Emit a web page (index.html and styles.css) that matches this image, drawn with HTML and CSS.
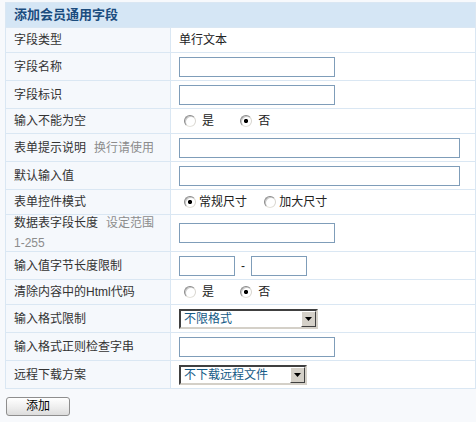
FILE: index.html
```html
<!DOCTYPE html>
<html lang="zh-CN">
<head>
<meta charset="utf-8">
<title>添加会员通用字段</title>
<link rel="stylesheet" href="styles.css">
</head>
<body>
<form class="field-form">
  <table class="form-table">
    <colgroup>
      <col class="col-label">
      <col class="col-value">
    </colgroup>
    <thead>
      <tr><th colspan="2" class="title-cell">添加会员通用字段</th></tr>
    </thead>
    <tbody>
      <tr class="row-text">
        <td class="label">字段类型</td>
        <td class="value">单行文本</td>
      </tr>
      <tr class="row-input">
        <td class="label">字段名称</td>
        <td class="value"><input type="text" class="txt"></td>
      </tr>
      <tr class="row-input">
        <td class="label">字段标识</td>
        <td class="value"><input type="text" class="txt"></td>
      </tr>
      <tr class="row-text">
        <td class="label">输入不能为空</td>
        <td class="value">
          <label class="opt opt-yes"><input type="radio" name="notnull" class="radio"><span>是</span></label>
          <label class="opt opt-no"><input type="radio" name="notnull" class="radio" checked><span>否</span></label>
        </td>
      </tr>
      <tr class="row-input">
        <td class="label">表单提示说明<span class="hint">换行请使用</span></td>
        <td class="value"><input type="text" class="txt txt-wide"></td>
      </tr>
      <tr class="row-input">
        <td class="label">默认输入值</td>
        <td class="value"><input type="text" class="txt txt-wide"></td>
      </tr>
      <tr class="row-text">
        <td class="label">表单控件模式</td>
        <td class="value">
          <label class="opt opt-tight"><input type="radio" name="size" class="radio" checked><span>常规尺寸</span></label>
          <label class="opt opt-tight opt-next"><input type="radio" name="size" class="radio"><span>加大尺寸</span></label>
        </td>
      </tr>
      <tr class="row-tall">
        <td class="label"><div class="label-wrap">数据表字段长度<span class="hint">设定范围</span><span class="hint hint-line">1-255</span></div></td>
        <td class="value"><input type="text" class="txt"></td>
      </tr>
      <tr class="row-input">
        <td class="label">输入值字节长度限制</td>
        <td class="value"><input type="text" class="txt txt-small"><span class="dash">-</span><input type="text" class="txt txt-small"></td>
      </tr>
      <tr class="row-text">
        <td class="label">清除内容中的Html代码</td>
        <td class="value">
          <label class="opt opt-yes"><input type="radio" name="nohtml" class="radio"><span>是</span></label>
          <label class="opt opt-no"><input type="radio" name="nohtml" class="radio" checked><span>否</span></label>
        </td>
      </tr>
      <tr class="row-input">
        <td class="label">输入格式限制</td>
        <td class="value">
          <span class="combo combo-format">
            <select class="combo-select"><option>不限格式</option></select>
            <span class="combo-btn"><svg width="7" height="4" viewBox="0 0 7 4"><path d="M0 0h7L3.5 4z" fill="#000"/></svg></span>
          </span>
        </td>
      </tr>
      <tr class="row-input">
        <td class="label">输入格式正则检查字串</td>
        <td class="value"><input type="text" class="txt"></td>
      </tr>
      <tr class="row-input">
        <td class="label">远程下载方案</td>
        <td class="value">
          <span class="combo combo-remote">
            <select class="combo-select"><option>不下载远程文件</option></select>
            <span class="combo-btn"><svg width="7" height="4" viewBox="0 0 7 4"><path d="M0 0h7L3.5 4z" fill="#000"/></svg></span>
          </span>
        </td>
      </tr>
    </tbody>
  </table>
  <div class="actions"><button type="submit" class="btn">添加</button></div>
</form>
</body>
</html>
```

FILE: styles.css
```css
html, body {
  margin: 0;
  padding: 0;
  background: #f7f9fc;
  overflow: hidden;
}

body {
  padding: 2px 0 0 5px;
  font-family: "Liberation Sans", "Noto Sans CJK SC", sans-serif;
  font-size: 12px;
  color: #333;
}

.form-table {
  width: 471px;
  border-collapse: collapse;
  table-layout: fixed;
  background: #fff;
}

.col-label { width: 165px; }

.form-table th,
.form-table td {
  border: 1px solid #dae7f3;
  padding: 0 8px;
  vertical-align: middle;
  line-height: 18px;
}

.title-cell {
  height: 24px;
  background: #d5e6f5;
  color: #1b4c7e;
  font-size: 13px;
  font-weight: bold;
  text-align: left;
}

.label {
  background: #f5f8fc;
  color: #333;
}

/* two-line label: 20px lines, allowed to bleed into the cell's edge */
.label-wrap {
  line-height: 20px;
  margin: -2px 0;
}

.value {
  background: #fff;
  color: #222;
  white-space: nowrap;
}

.row-text td { height: 24px; }
.row-input td { height: 27px; }
.row-tall td { height: 36px; }

.hint {
  color: #8c8c8c;
  margin-left: 8px;
}

.hint-line {
  display: block;
  margin-left: 0;
}

.txt {
  box-sizing: border-box;
  width: 156px;
  height: 20px;
  margin: 0;
  padding: 1px 3px;
  border: 1px solid #7f9db9;
  background: #fff;
  vertical-align: middle;
  font: inherit;
}

.txt-wide { width: 281px; }
.txt-small { width: 56px; }

.dash {
  display: inline-block;
  margin: 0 6px;
  vertical-align: middle;
}

/* radio options */
.opt {
  display: inline-flex;
  align-items: center;
  vertical-align: middle;
  margin-left: 5px;
}

.opt span { margin-left: 6px; }
.opt-no { margin-left: 23px; }
.opt-tight span { margin-left: 3px; }
.opt-next { margin-left: 14px; }

.radio {
  appearance: none;
  -webkit-appearance: none;
  box-sizing: border-box;
  width: 12px;
  height: 12px;
  margin: 0;
  border-radius: 50%;
  border: 1px solid;
  border-color: #8a8a8a #d8d6d0 #e4e2dc #8a8a8a;
  background: #fff;
  box-shadow: inset 1px 1px 0 #c8c8c8;
}

.radio:checked {
  background: radial-gradient(circle, #000 0 1.8px, #fff 2.4px);
}

/* select with classic drop button */
.combo {
  display: inline-flex;
  box-sizing: border-box;
  height: 20px;
  vertical-align: middle;
  border: 2px solid;
  border-color: #404040 #d4d0c8 #d4d0c8 #404040;
  background: #fff;
}

.combo-format { width: 139px; }
.combo-remote { width: 128px; }

.combo-select {
  appearance: none;
  -webkit-appearance: none;
  flex: 1;
  min-width: 0;
  height: 16px;
  margin: 0;
  padding: 0 0 0 3px;
  border: 0;
  background: #fff;
  color: #165a86;
  font: inherit;
  font-size: 12px;
  line-height: 16px;
  outline: none;
}

.combo-btn {
  display: flex;
  align-items: center;
  justify-content: center;
  box-sizing: border-box;
  width: 15px;
  height: 16px;
  border: 1px solid;
  border-color: #fff #404040 #404040 #fff;
  background: #d4d0c8;
}

.actions {
  margin-top: 8px;
  padding-left: 1px;
}

.btn {
  box-sizing: border-box;
  width: 64px;
  height: 19px;
  margin: 0;
  padding: 0;
  border: 1px solid #8e8e8e;
  border-radius: 3px;
  background: linear-gradient(#ffffff, #ececec 60%, #dcdcdc);
  font-family: "Liberation Sans", "Noto Sans CJK SC", sans-serif;
  font-size: 12px;
  line-height: 17px;
  color: #000;
}
```
